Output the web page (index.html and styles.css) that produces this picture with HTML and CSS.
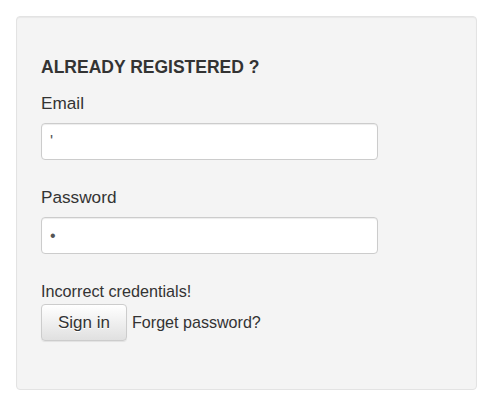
FILE: index.html
```html
<!DOCTYPE html>
<html>
<head>
<meta charset="utf-8">
<link rel="stylesheet" href="styles.css">
</head>
<body>
<div class="well">
  <h3 class="title">ALREADY REGISTERED ?</h3>
  <form class="form">
    <div class="group">
      <label class="label">Email</label>
      <input class="input" type="text" value="'">
    </div>
    <div class="group">
      <label class="label">Password</label>
      <input class="input" type="password" value="x">
    </div>
    <p class="error">Incorrect credentials!</p>
    <div class="actions">
      <button class="btn" type="button">Sign in</button>
      <span class="forgot">Forget password?</span>
    </div>
  </form>
</div>
</body>
</html>
```
FILE: styles.css
```css
html, body {
  margin: 0;
  padding: 0;
  background: #fff;
}
body {
  padding: 16px;
  font-family: "Liberation Sans", Arial, sans-serif;
  color: #333;
}
.well {
  box-sizing: border-box;
  width: 461px;
  height: 374px;
  background: #f4f4f4;
  border: 1px solid #e3e3e3;
  border-radius: 4px;
  box-shadow: inset 0 1px 1px rgba(0,0,0,0.05);
  padding: 40px 24px 0 24px;
}
.title {
  margin: 0;
  font-size: 17.5px;
  line-height: 20px;
  font-weight: bold;
}
.form {
  margin: 16px 0 0 0;
}
.group {
  margin-bottom: 27px;
}
.label {
  display: block;
  font-size: 17.2px;
  line-height: 20px;
  margin-bottom: 10px;
}
.input {
  display: block;
  box-sizing: border-box;
  width: 337px;
  height: 37px;
  margin: 0;
  padding: 0 8px;
  border: 1px solid #ccc;
  border-radius: 4px;
  background: #fff;
  box-shadow: inset 0 1px 1px rgba(0,0,0,0.075);
  font-family: "Liberation Sans", Arial, sans-serif;
  font-size: 16px;
  color: #555;
  outline: none;
}
.error {
  margin: 0;
  font-size: 16.2px;
  line-height: 20px;
}
.actions {
  margin-top: 3px;
  display: flex;
  align-items: baseline;
  gap: 5px;
}
.btn {
  box-sizing: border-box;
  height: 37px;
  width: 86px;
  padding: 0;
  margin: 0;
  font-family: "Liberation Sans", Arial, sans-serif;
  font-size: 17px;
  color: #333;
  background: linear-gradient(to bottom, #fff 0%, #e0e0e0 100%);
  border: 1px solid #ccc;
  border-radius: 4px;
  box-shadow: inset 0 1px 0 rgba(255,255,255,0.15), 0 1px 1px rgba(0,0,0,0.075);
  text-shadow: 0 1px 0 #fff;
}
.forgot {
  font-size: 16.1px;
}
```
